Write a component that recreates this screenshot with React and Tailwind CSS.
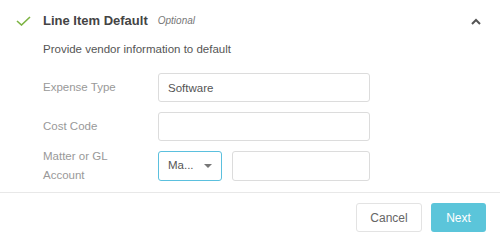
export default function App() {
  return (
    <div className="w-[500px] h-[244px] bg-white overflow-hidden" style={{ fontFamily: '"Liberation Sans", Arial, sans-serif' }}>
      <div className="flex items-center h-[41px] pl-[16px] pr-[19px]">
        <svg width="15" height="10" viewBox="0 0 15 10" className="mt-[1px]">
          <path d="M1 5 L5.5 9 L14 1" fill="none" stroke="#7cb342" strokeWidth="1.6" />
        </svg>
        <span className="ml-[12px] text-[13px] font-bold text-[#444]">Line Item Default</span>
        <span className="ml-[10px] text-[10px] italic text-[#777]">Optional</span>
        <svg width="10" height="7" viewBox="0 0 10 7" className="ml-auto mt-[2px]">
          <path d="M1 6 L5 2 L9 6" fill="none" stroke="#555" strokeWidth="2" />
        </svg>
      </div>
      <div className="pl-[43px] pr-[130px]">
        <p className="text-[11.5px] text-[#555] leading-[14px] mt-[1px]">Provide vendor information to default</p>
        <div className="mt-[17px] flex flex-col gap-[10px]">
          <div className="flex items-center">
            <label className="w-[115px] shrink-0 text-[11.5px] text-[#999]">Expense Type</label>
            <input
              className="flex-1 min-w-0 h-[29px] border border-[#dcdcdc] rounded-[3px] px-[9px] text-[11.5px] text-[#555] outline-none"
              defaultValue="Software"
            />
          </div>
          <div className="flex items-center">
            <label className="w-[115px] shrink-0 text-[11.5px] text-[#999]">Cost Code</label>
            <input className="flex-1 min-w-0 h-[29px] border border-[#dcdcdc] rounded-[3px] px-[9px] text-[11.5px] text-[#555] outline-none" />
          </div>
          <div className="flex items-center h-[30px]">
            <label className="w-[115px] shrink-0 text-[11.5px] text-[#999] leading-[19px]">
              Matter or GL
              <br />
              Account
            </label>
            <div className="w-[64px] shrink-0 h-[30px] border border-[#5bc0de] rounded-[3px] flex items-center pl-[9px] pr-[9px] text-[11.5px] text-[#555]">
              <span>Ma...</span>
              <svg width="8" height="4" viewBox="0 0 8 4" className="ml-auto">
                <path d="M0 0 L8 0 L4 4 Z" fill="#777" />
              </svg>
            </div>
            <input className="ml-[10px] flex-1 min-w-0 h-[30px] border border-[#dcdcdc] rounded-[3px] px-[9px] text-[11.5px] text-[#555] outline-none" />
          </div>
        </div>
      </div>
      <div className="mt-[11px] border-t border-[#e8e8e8] flex justify-end gap-[9px] pt-[10px] pr-[14px]">
        <button className="w-[66px] h-[29px] border border-[#e3e3e3] rounded-[3px] bg-white text-[12px] text-[#666]">Cancel</button>
        <button className="w-[55px] h-[29px] rounded-[3px] bg-[#5bc5da] text-[12px] text-white">Next</button>
      </div>
    </div>
  )
}
